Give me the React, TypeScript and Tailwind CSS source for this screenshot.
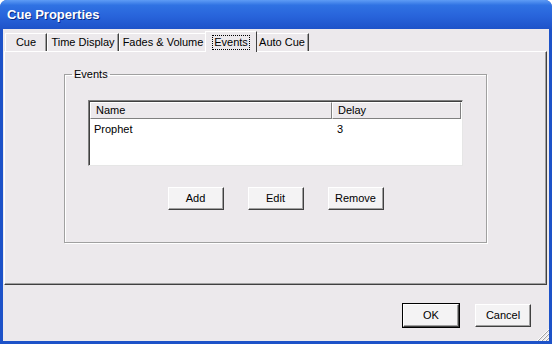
import React from "react";

const tabs = [
  { label: "Cue", w: "w-[42px]" },
  { label: "Time Display", w: "w-[72px]" },
  { label: "Fades & Volume", w: "w-[88px]" },
  { label: "Events", w: "w-[52px]" },
  { label: "Auto Cue", w: "w-[54px]" },
];

const Button = ({ label, isDefault }: { label: string; isDefault?: boolean }) => (
  <div
    className={`w-[56px] h-[23px] flex items-center justify-center bg-[#f4f3f4] text-[11px] text-black border-t border-l border-t-white border-l-white border-r border-b border-r-[#404040] border-b-[#404040] shadow-[inset_-1px_-1px_0_#a0a0a0] ${
      isDefault ? "outline outline-1 outline-black" : ""
    }`}
  >
    {label}
  </div>
);

export default function App() {
  return (
    <div className="w-[552px] h-[344px] flex flex-col rounded-t-[7px] bg-[#1d52c8] font-['Liberation_Sans',Arial,sans-serif] select-none overflow-hidden">
      {/* title bar */}
      <div className="h-[29px] flex items-center px-[7px] bg-[linear-gradient(to_bottom,#5e9cf5,#2f72e3_18%,#2864db_55%,#1e53c9)]">
        <span className="text-white font-bold text-[13px] [text-shadow:1px_1px_0_#0a2a86]">Cue Properties</span>
      </div>

      {/* body */}
      <div className="flex-1 mx-[3px] mb-[3px] bg-[#ece9ec] flex flex-col relative">
        {/* tabs */}
        <div className="flex items-end pt-[2px] pl-[2px] h-[22px] relative z-10">
          {tabs.map((t) => {
            const active = t.label === "Events";
            return (
              <div
                key={t.label}
                className={
                  active
                    ? `${t.w} h-[21px] -mx-[2px] -mb-[1px] flex items-center justify-center bg-[#ece9ec] border-t border-l border-t-white border-l-white border-r border-r-[#404040] relative z-10`
                    : `${t.w} h-[18px] flex items-center justify-center border-t border-l border-t-white border-l-white border-r border-r-[#404040] shadow-[inset_-1px_0_0_#a0a0a0]`
                }
              >
                <span
                  className={`text-[11px] text-black leading-[13px] ${
                    active ? "border border-dotted border-black px-[1px]" : ""
                  }`}
                >
                  {t.label}
                </span>
              </div>
            );
          })}
        </div>

        {/* tab panel */}
        <div className="h-[234px] ml-[1px] mr-[2px] border-t border-l border-t-white border-l-white border-r border-b border-r-[#404040] border-b-[#404040] shadow-[inset_-1px_-1px_0_#a0a0a0] pt-[16px] pl-[59px]">
          <fieldset className="w-[423px] h-[175px] border border-[#a0a0a0] shadow-[1px_1px_0_#fff,inset_1px_1px_0_#fff] px-[23px] pt-[19px] flex flex-col">
            <legend className="-ml-[16px] px-[2px] text-[11px] text-black leading-[13px]">Events</legend>

            {/* list view */}
            <div className="w-[375px] h-[66px] bg-white border-t border-l border-t-[#808080] border-l-[#808080] border-r border-b border-r-[#e6e6e6] border-b-[#e6e6e6] shadow-[inset_1px_1px_0_#404040] p-[1px] flex flex-col">
              <div className="flex h-[17px] bg-[#ece9ec] text-[11px] text-black">
                <div className="w-[242px] pl-[5px] flex items-center border-t border-l border-t-white border-l-white border-r border-b border-r-[#808080] border-b-[#808080]">
                  Name
                </div>
                <div className="flex-1 pl-[5px] flex items-center border-t border-l border-t-white border-l-white border-r border-b border-r-[#808080] border-b-[#808080]">
                  Delay
                </div>
              </div>
              <div className="flex h-[16px] items-center text-[11px] text-black mt-[2px]">
                <div className="w-[242px] pl-[4px]">Prophet</div>
                <div className="pl-[5px]">3</div>
              </div>
            </div>

            <div className="flex justify-center gap-[24px] mt-[21px]">
              <Button label="Add" />
              <Button label="Edit" />
              <Button label="Remove" />
            </div>
          </fieldset>
        </div>

        {/* dialog buttons */}
        <div className="flex justify-end gap-[16px] pr-[18px] pt-[19px]">
          <Button label="OK" isDefault />
          <Button label="Cancel" />
        </div>

        {/* size grip */}
        <svg className="absolute right-0 bottom-0" width="12" height="12" viewBox="0 0 12 12">
          {[0, 4, 8].map((o) => (
            <g key={o}>
              <line x1={o} y1={12} x2={12} y2={o} stroke="#fff" strokeWidth="1" />
              <line x1={o + 1} y1={12} x2={12} y2={o + 1} stroke="#a0a0a0" strokeWidth="1" />
            </g>
          ))}
        </svg>
      </div>
    </div>
  );
}
